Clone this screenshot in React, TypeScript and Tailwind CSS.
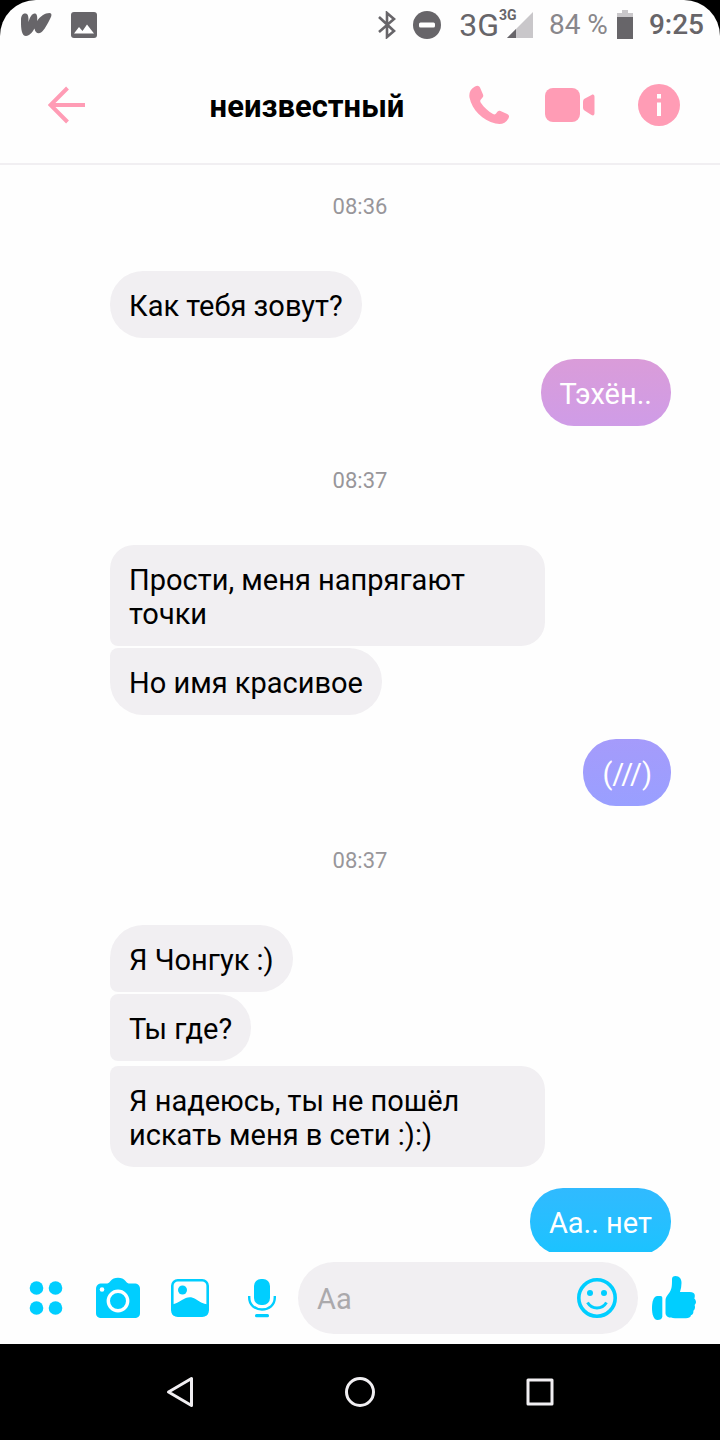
import { useState } from "react";
import clsx from "clsx";

type Message = {
  kind: "time" | "in" | "out";
  text: string;
  className?: string;
};

const messages: Message[] = [
  { kind: "time", text: "08:36", className: "mt-[28px]" },
  { kind: "in", text: "Как тебя зовут?", className: "mt-[52px] rounded-[33px]" },
  { kind: "out", text: "Тэхён..", className: "mt-[21px] from-[#da9cd9] to-[#cf9ce7]" },
  { kind: "time", text: "08:37", className: "mt-[41px]" },
  { kind: "in", text: "Прости, меня напрягают точки", className: "mt-[52px] rounded-[24px] rounded-bl-lg" },
  { kind: "in", text: "Но имя красивое", className: "mt-[2px] rounded-[33px] rounded-tl-lg" },
  { kind: "out", text: "(///)", className: "mt-[24px] from-[#a59bfb] to-[#999fff]" },
  { kind: "time", text: "08:37", className: "mt-[41px]" },
  { kind: "in", text: "Я Чонгук :)", className: "mt-[52px] rounded-[33px] rounded-bl-lg" },
  { kind: "in", text: "Ты где?", className: "mt-[2px] rounded-[33px] rounded-l-lg" },
  { kind: "in", text: "Я надеюсь, ты не пошёл искать меня в сети :):)", className: "mt-[5px] rounded-[24px] rounded-tl-lg" },
  { kind: "out", text: "Аа.. нет", className: "mt-[21px] from-[#30baff] to-[#1ac3ff]" },
];

function StatusBar() {
  return (
    <div className="flex h-[50px] shrink-0 items-center pl-5 pr-4 text-[28px] leading-none text-[#676569]">
      <svg width="32" height="26" viewBox="0 0 32 26" fill="currentColor">
        <path d="M1 8C1 4 2.500 1.500 5 1.500C8 1.500 8.700 4 8.500 10C10 5 12 1.500 14.500 1.500C17 1.500 17.500 4 17.200 9C20 4.500 25 1 29.500 1C32 1.200 31.800 3.500 30.500 6C27.500 12 24.500 18 21 20.500C18 22.300 15 20.500 14.500 16.500C12.500 20 9.500 24 6 24C2 24 .8 18 1 8Z" />
      </svg>
      <svg className="ml-[19px]" width="26" height="26" viewBox="0 0 26 26">
        <rect width="26" height="26" rx="3" fill="currentColor" />
        <path d="M3 21.5L8 15L11.5 19L16 12.5L23 21.5Z" fill="#fff" />
      </svg>

      <div className="ml-auto flex items-center">
        <svg width="18" height="28" viewBox="0 0 18 28" fill="none" stroke="currentColor" strokeWidth="2.6">
          <path d="M1 6L16 20L9 26V2L16 8L1 21" />
        </svg>
        <svg className="ml-[17px]" width="28" height="28" viewBox="0 0 28 28">
          <circle cx="14" cy="14" r="14" fill="currentColor" />
          <rect x="6" y="11.5" width="16" height="5" rx="1.5" fill="#fff" />
        </svg>
        <span className="ml-[18px] text-[32px] leading-none">3G</span>
        <div className="relative ml-2">
          <svg width="26" height="26" viewBox="0 0 26 26">
            <path d="M26 0V26H0Z" fill="#c9c7ca" />
            <path d="M9 17V26H0Z" fill="currentColor" />
          </svg>
          <span className="absolute -left-2 -top-1 text-[14px] font-bold leading-none">3G</span>
        </div>
        <span className="ml-4 text-[#89878b]">84 %</span>
        <svg className="ml-[9px]" width="16" height="30" viewBox="0 0 16 30">
          <path d="M5 0H11V3H16V8H0V3H5Z" fill="#c9c7ca" />
          <path d="M0 7H16V29H0Z" fill="currentColor" />
        </svg>
        <span className="ml-4 font-medium">9:25</span>
      </div>
    </div>
  );
}

function ChatHeader() {
  return (
    <header className="flex h-[115px] shrink-0 items-center border-b-2 border-[#f1eff2] pb-1 pl-12 pr-10 text-[#ff9cb5]">
      <button aria-label="Назад">
        <svg width="37" height="38" viewBox="0 0 37 38" fill="none" stroke="currentColor" strokeWidth="4">
          <path d="M19.500 2L2.500 19L19.500 36M3 19H37" />
        </svg>
      </button>
      <h1 className="flex-1 pl-[60px] pt-1 text-center text-[31px] font-bold leading-[34px] text-black">неизвестный</h1>
      <button aria-label="Позвонить">
        <svg width="40" height="40" viewBox="0 0 40 40" fill="currentColor">
          <path d="M6 1.500C8.500 0 10 .8 11 2.500L14 9.500C14.700 11.400 14 12.500 12.300 14C10.800 15.400 11 16.500 12 18C15 22.500 19 26 24 29C25.500 29.800 26.500 29.500 27.500 28C28.500 26.300 29.500 25.200 31.500 26L38.200 29C40.300 30 40.400 31.700 39.400 33.500C36.500 38.800 32 39.700 26.500 38.500C13 35.200 3 24.500 .5 12.500C-.3 8 1.500 3.800 6 1.500Z" />
        </svg>
      </button>
      <button aria-label="Видеозвонок" className="ml-9">
        <svg width="50" height="34" viewBox="0 0 50 34" fill="currentColor">
          <rect width="35" height="34" rx="8" />
          <path d="M38 14C38 12.500 38.500 11.500 39.500 10.800L46.500 7C48.500 6 49.500 7 49.500 9V25C49.500 27 48.500 28 46.500 27L39.500 22.500C38.500 21.800 38 21 38 19.500Z" />
        </svg>
      </button>
      <button aria-label="Информация" className="ml-[43px]">
        <svg width="42" height="42" viewBox="0 0 42 42">
          <circle cx="21" cy="21" r="21" fill="currentColor" />
          <path d="M19 10H23V14.500H19ZM19 18.500H23V32H19Z" fill="#fff" />
        </svg>
      </button>
    </header>
  );
}

function Bubble({ message }: { message: Message }) {
  if (message.kind === "time") {
    return (
      <li className={clsx("pt-px text-center text-[22px] leading-[25px] text-[#98969a]", message.className)}>
        <time>{message.text}</time>
      </li>
    );
  }
  const incoming = message.kind === "in";
  return (
    <li
      className={clsx(
        "max-w-[435px] px-[19px] pb-[15px] pt-[18px] text-[29px] leading-[34px]",
        incoming
          ? "ml-[110px] self-start bg-[#f1eff2] text-black"
          : "mr-[49px] self-end rounded-[33px] bg-linear-to-b text-white",
        message.className
      )}
    >
      {message.text}
    </li>
  );
}

function Composer() {
  const [draft, setDraft] = useState("");

  return (
    <form className="flex shrink-0 items-center bg-[#fefefe] py-[10px] pl-[29px] pr-6 text-[#00ceff]">
      <button type="button" aria-label="Ещё">
        <svg width="34" height="36" viewBox="0 0 34 36" fill="currentColor">
          <circle cx="7.500" cy="8" r="6.800" />
          <circle cx="26.500" cy="8" r="6.800" />
          <circle cx="7.500" cy="28" r="6.800" />
          <circle cx="26.500" cy="28" r="6.800" />
        </svg>
      </button>
      <button type="button" aria-label="Камера" className="ml-[33px]">
        <svg width="44" height="42" viewBox="0 0 44 42">
          <path fill="currentColor" d="M6 6.500H10C12 6.500 13 6 14.500 4C16.500 1.500 18.500 .8 22 .8C25.500 .8 27.500 1.500 29.500 4C31 6 32 6.500 34 6.500H38C42 6.500 44 8.500 44 12V36C44 39.500 42 41 38.500 41H5.500C2 41 0 39.500 0 36V12C0 8.500 2 6.500 6 6.500Z" />
          <circle cx="22" cy="24" r="9.700" fill="none" stroke="#fff" strokeWidth="3.400" />
          <circle cx="6" cy="12.500" r="2.300" fill="#fff" />
        </svg>
      </button>
      <button type="button" aria-label="Галерея" className="ml-[31px]">
        <svg width="38" height="38" viewBox="0 0 38 38">
          <rect x="1.300" y="1.300" width="35.400" height="35.400" rx="5.500" fill="none" stroke="currentColor" strokeWidth="2.600" />
          <circle cx="11.500" cy="11" r="4.500" fill="currentColor" />
          <path fill="currentColor" d="M1 25.500C5 24.500 7.500 23.500 11 21C15.500 17.800 20 17 24.500 20C28 22.500 32 25 37 25.500V33C37 36 35.500 37 33 37H5C2.500 37 1 36 1 33Z" />
        </svg>
      </button>
      <button type="button" aria-label="Голосовое сообщение" className="ml-[39px]">
        <svg width="28" height="40" viewBox="0 0 28 40">
          <rect x="6" y="1" width="16" height="26" rx="7" fill="currentColor" />
          <path d="M1.200 18V19.500C1.200 27 7 31.500 14 31.500S26.800 27 26.800 19.500V18" fill="none" stroke="currentColor" strokeWidth="2.400" />
          <rect x="7" y="36" width="14" height="3.200" rx="1.500" fill="currentColor" />
        </svg>
      </button>
      <div className="ml-[22px] flex h-[72px] min-w-0 flex-1 items-center rounded-full bg-[#f1eff2] pl-[19px] pr-[21px]">
        <input
          type="text"
          aria-label="Сообщение"
          placeholder="Aa"
          value={draft}
          onChange={(e) => setDraft(e.target.value)}
          className="min-w-0 flex-1 bg-transparent pt-[2px] text-[29px] leading-[34px] text-black outline-none placeholder:text-[#aba9ac]"
        />
        <button type="button" aria-label="Смайлики">
          <svg width="40" height="40" viewBox="0 0 40 40" fill="none" stroke="currentColor">
            <circle cx="20" cy="20" r="18.200" strokeWidth="3.600" />
            <path d="M10.500 24.500C13 28.500 16 30 20 30S27 28.500 29.500 24.500" strokeWidth="3" />
            <circle cx="13" cy="15" r="3" fill="currentColor" stroke="none" />
            <circle cx="27" cy="15" r="3" fill="currentColor" stroke="none" />
          </svg>
        </button>
      </div>
      <button type="button" aria-label="Нравится" className="ml-[14px]">
        <svg width="44" height="46" viewBox="0 0 44 46" fill="currentColor">
          <path d="M5.500 21H8.500C9.700 21 10.300 21.700 10.300 23V41.500C10.300 44 8 45 5.500 45C1.500 45 0 39 0 33C0 27 1.500 21 5.500 21Z" />
          <path d="M20 4C20 2 21.300 1 23.500 1C27.500 1 29.500 4 29.500 8C29.500 11 29 14 28 17H37.500C41.500 17 43 18.500 42.800 21C42.700 22.500 42.500 23 42.300 23.500C44.500 25.500 44.500 28.500 42.600 30C43.500 32.500 42.800 34.500 41.300 35.800C41.700 38 40.800 39.500 39 40.300C38.500 42.500 36.500 43.200 34 43.200H23C17 43.200 13.500 41.500 13.500 38V26C13.500 21.500 16 20 17.800 17C20 13.500 20 10 20 4Z" />
        </svg>
      </button>
    </form>
  );
}

function NavBar() {
  return (
    <nav className="flex h-24 shrink-0 items-center justify-center bg-black text-[#f1eff2]">
      <button aria-label="Назад" className="flex w-1/4 justify-center">
        <svg width="28" height="32" viewBox="0 0 28 32" fill="none" stroke="currentColor" strokeWidth="3" strokeLinejoin="round">
          <path d="M25.500 2.500V29.500L2.500 16Z" />
        </svg>
      </button>
      <button aria-label="Домой" className="flex w-1/4 justify-center">
        <svg width="32" height="32" viewBox="0 0 32 32" fill="none" stroke="currentColor" strokeWidth="3">
          <circle cx="16" cy="16" r="13.500" />
        </svg>
      </button>
      <button aria-label="Недавние" className="flex w-1/4 justify-center">
        <svg width="28" height="28" viewBox="0 0 28 28" fill="none" stroke="currentColor" strokeWidth="3" strokeLinejoin="round">
          <rect x="2" y="2" width="24" height="24" />
        </svg>
      </button>
    </nav>
  );
}

export default function App() {
  return (
    <div className="h-screen bg-black font-['Roboto',sans-serif]">
      <div className="flex h-full flex-col overflow-hidden rounded-t-[36px] bg-[#fefefe]">
        <StatusBar />
        <ChatHeader />
        <main className="min-h-0 flex-1 overflow-hidden">
          <ul className="flex flex-col">
            {messages.map((message, i) => (
              <Bubble key={i} message={message} />
            ))}
          </ul>
        </main>
        <Composer />
        <NavBar />
      </div>
    </div>
  );
}
